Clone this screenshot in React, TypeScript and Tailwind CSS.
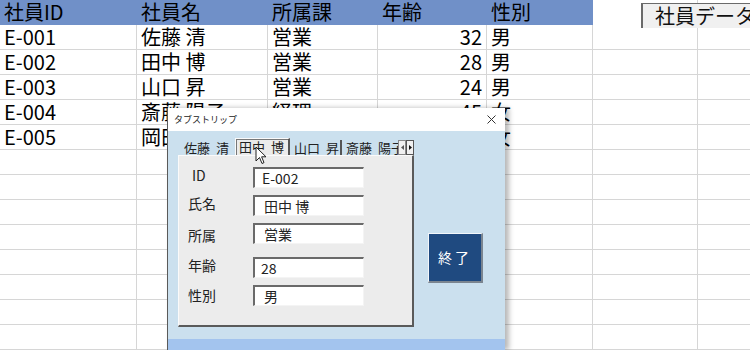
import React from "react";

// Worksheet columns (px) and rows
const COLS = [137, 131, 110, 109, 106, 105, 60];
const HEAD = ["社員ID", "社員名", "所属課", "年齢", "性別"];
const ROWS = [
  ["E-001", "佐藤 清", "営業", "32", "男"],
  ["E-002", "田中 博", "営業", "28", "男"],
  ["E-003", "山口 昇", "営業", "24", "男"],
  ["E-004", "斎藤 陽子", "経理", "45", "女"],
  ["E-005", "岡田 明", "経理", "38", "女"],
];
const EMPTY_ROWS = 8;

const FIELDS = [
  { label: "ID", value: "E-002", gap: "mt-[11px]", lpad: "pl-[13px]", vpad: "pl-[7px]" },
  { label: "氏名", value: "田中 博", gap: "mt-[7px]", lpad: "pl-[9px]", vpad: "pl-[9px]" },
  { label: "所属", value: "営業", gap: "mt-[7px]", lpad: "pl-[9px] pt-[4px]", vpad: "pl-[9px]" },
  { label: "年齢", value: "28", gap: "mt-[13px]", lpad: "pl-[9px]", vpad: "pl-[6px]" },
  { label: "性別", value: "男", gap: "mt-[7px]", lpad: "pl-[9px] pt-[2px]", vpad: "pl-[9px]" },
];

function Cell({ w, children, right }: { w: number; children?: React.ReactNode; right?: boolean }) {
  return (
    <div
      style={{ width: w }}
      className={`shrink-0 h-full overflow-hidden whitespace-nowrap border-r border-[#d6d6d6] ${
        right ? "text-right pr-[4px]" : "pl-[4px]"
      }`}
    >
      {children}
    </div>
  );
}

function Sheet() {
  return (
    <div className="text-[20px] text-black leading-[24px]">
      <div className="flex h-[25px]">
        {COLS.map((w, i) => (
          <div
            key={i}
            style={{ width: w }}
            className={`shrink-0 h-full pl-[4px] ${i < 5 ? "bg-[#7090c8]" : "bg-white border-r border-[#d6d6d6]"}`}
          >
            {HEAD[i] ?? ""}
          </div>
        ))}
      </div>
      {ROWS.map((r, ri) => (
        <div key={ri} className="flex h-[25px] border-b border-[#d6d6d6]">
          {COLS.map((w, i) => (
            <Cell key={i} w={w} right={i === 3}>
              {r[i] ?? ""}
            </Cell>
          ))}
        </div>
      ))}
      {Array.from({ length: EMPTY_ROWS }).map((_, ri) => (
        <div key={ri} className="flex h-[25px] border-b border-[#d6d6d6]">
          {COLS.map((w, i) => (
            <Cell key={i} w={w} />
          ))}
        </div>
      ))}
    </div>
  );
}

function Cursor() {
  return (
    <svg width="12" height="19" viewBox="0 0 12 19" className="absolute left-[255px] top-[146px]">
      <path d="M1 1 L1 15 L4.5 11.5 L7 17.5 L9 16.6 L6.6 10.8 L11 10.8 Z" fill="#fff" stroke="#222" strokeWidth="1" strokeLinejoin="round" />
    </svg>
  );
}

// family / given name with the wide gap the form font shows
function Name({ a, b }: { a: string; b: string }) {
  return (
    <span className="inline-flex gap-[6px] whitespace-nowrap">
      <span>{a}</span>
      <span>{b}</span>
    </span>
  );
}

function TabStrip() {
  return (
    <div className="w-[236px] flex flex-col">
      {/* tab row */}
      <div className="h-[16px] flex items-end text-[13px] leading-[15px] text-[#222]">
        <div className="w-[57px] pl-[6px] overflow-hidden">
          <Name a="佐藤" b="清" />
        </div>
        <div className="w-[55px] h-[17px] pl-[3px] border-t border-l border-[#fafafa] border-r-2 border-r-[#555] bg-[#ebebeb] overflow-hidden shadow-[inset_1px_1px_0_#777]">
          <Name a="田中" b="博" />
        </div>
        <div className="w-[52px] pl-[4px] overflow-hidden border-r-2 border-[#555]">
          <Name a="山口" b="昇" />
        </div>
        <div className="w-[56px] pl-[4px] overflow-hidden">
          <Name a="斎藤" b="陽子" />
        </div>
        <div className="flex h-[15px]">
          <div className="w-[8px] h-full bg-[#f0f0f0] border border-[#888] flex items-center justify-center">
            <svg width="3" height="5" viewBox="0 0 3 5"><path d="M3 0 L0 2.5 L3 5 Z" fill="#555" /></svg>
          </div>
          <div className="w-[8px] h-full bg-[#f0f0f0] border border-[#555] flex items-center justify-center">
            <svg width="3" height="5" viewBox="0 0 3 5"><path d="M0 0 L3 2.5 L0 5 Z" fill="#111" /></svg>
          </div>
        </div>
      </div>
      {/* panel */}
      <div className="h-[172px] bg-[#ececec] border-l border-t border-[#fafafa] border-r-2 border-b-2 border-r-[#5a5a5a] border-b-[#5a5a5a] flex flex-col">
        {FIELDS.map((f) => (
          <div key={f.label} className={`flex h-[21px] ${f.gap}`}>
            <div className={`w-[74px] shrink-0 text-[14px] leading-[17px] text-[#222] ${f.lpad}`}>{f.label}</div>
            <div
              className={`w-[111px] h-[21px] bg-white border-t-2 border-l-2 border-[#6a6a6a] border-r border-b border-r-[#f4f4f4] border-b-[#f4f4f4] text-[14px] leading-[19px] text-[#222] ${f.vpad}`}
            >
              {f.value}
            </div>
          </div>
        ))}
      </div>
    </div>
  );
}

function UserForm() {
  return (
    <div className="absolute left-[167px] top-[108px] w-[338px] h-[242px] flex flex-col border-l border-[#5a5a5a] shadow-[4px_0_5px_rgba(0,0,0,0.28)]">
      <div className="h-[23px] bg-white flex items-center justify-between pl-[6px] pr-[9px] shrink-0">
        <span className="text-[9px] leading-[12px] text-[#222]">タブストリップ</span>
        <svg width="9" height="9" viewBox="0 0 9 9">
          <path d="M0.5 0.5 L8.5 8.5 M8.5 0.5 L0.5 8.5" stroke="#333" strokeWidth="1" />
        </svg>
      </div>
      <div className="flex-1 bg-[#cbe0ee] flex pl-[10px] pt-[8px]">
        <TabStrip />
        <div className="ml-[14px] mt-[94px]">
          <div className="w-[55px] h-[50px] bg-[#1f4a80] border-t border-l border-[#f2f6fa] border-r-2 border-b-2 border-r-[#7b8590] border-b-[#7b8590] flex items-center justify-center text-white text-[14px] tracking-[3px]">
            終了
          </div>
        </div>
      </div>
      <div className="h-[11px] bg-[#a3c4ee] shrink-0" />
    </div>
  );
}

export default function App() {
  return (
    <div
      className="relative w-[750px] h-[350px] overflow-hidden bg-white"
      style={{ fontFamily: '"Noto Sans CJK JP", "Noto Sans", sans-serif' }}
    >
      <Sheet />
      <div className="absolute left-[641px] top-[3px] w-[120px] h-[25px] bg-[#f0f0f0] border-l-2 border-t border-[#6a6a6a] pl-[12px] text-[20px] leading-[23px] text-[#111] whitespace-nowrap">
        社員データ
      </div>
      <UserForm />
      <Cursor />
    </div>
  );
}
